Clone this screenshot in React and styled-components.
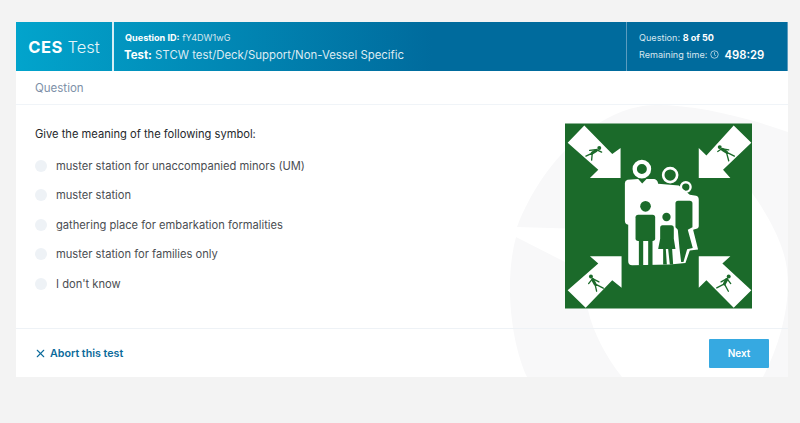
import React from "react";
import styled, { createGlobalStyle } from "styled-components";
import { X } from "lucide-react";

const answers = [
  "muster station for unaccompanied minors (UM)",
  "muster station",
  "gathering place for embarkation formalities",
  "muster station for families only",
  "I don't know",
];

const GREEN = "#1b6a2a";

function Person({ head, torso, limbs }) {
  return (
    <g fill="none" stroke={GREEN} strokeLinecap="round" strokeLinejoin="round">
      <circle cx={head[0]} cy={head[1]} r="6" fill={GREEN} stroke="none" />
      <path d={torso} strokeWidth="9" />
      <path d={limbs} strokeWidth="4" />
    </g>
  );
}

function MusterSign() {
  return (
    <SignSvg viewBox="30 26 562 556">
      <rect x="30" y="26" width="562" height="556" fill={GREEN} />
      <g fill="#fff">
        <polygon points="88,32 172,118 197,100 197,190 105,190 130,165 38,84" />
        <polygon points="537,32 590,84 505,165 527,190 432,190 432,100 455,122" />
        <polygon points="38,527 92,580 172,497 200,520 200,425 105,425 130,447" />
        <polygon points="590,527 537,580 455,497 432,520 432,425 527,425 503,447" />
        <path d="M218 195 L250 193 L262 206 L275 193 L298 193 Q308 195 310 207 L372 212 L405 240 L424 243 Q432 245 432 255 L432 335 Q432 343 415 345 L430 405 L405 408 L392 445 L345 450 L232 452 Q220 452 220 440 L220 330 Q210 328 210 318 L210 205 Q210 197 218 195 Z" />
      </g>
      <g fill="none" stroke="#fff">
        <circle cx="261" cy="163" r="21.5" strokeWidth="13" />
        <circle cx="346" cy="181" r="21" strokeWidth="8" />
        <circle cx="393" cy="217" r="14.5" strokeWidth="7" />
      </g>
      <g fill={GREEN}>
        <circle cx="272" cy="275" r="16" />
        <rect x="242" y="300" width="59" height="79" rx="8" />
        <rect x="252" y="375" width="13" height="78" />
        <rect x="280" y="375" width="13" height="78" />
        <circle cx="335" cy="307" r="12.5" />
        <path d="M323 332 L349 332 Q357 332 357 340 L357 372 L362 403 L352 403 L355 450 L345 450 L340 403 L333 403 L336 450 L325 450 L325 403 L310 403 L316 372 L316 340 Q316 332 323 332 Z" />
        <path d="M370 258 L405 258 Q413 258 413 266 L413 338 L399 345 L414 400 L397 404 L386 442 L379 442 L374 400 L369 345 L362 338 L362 266 Q362 258 370 258 Z" />
      </g>
      <Person head={[133, 100]} torso="M124 107 L112 115" limbs="M112 115 L93 124 M112 115 L110 136 M126 105 L140 112 M122 105 L104 107" />
      <Person head={[495, 97]} torso="M503 104 L515 112" limbs="M515 112 L539 124 M515 112 L522 138 M501 102 L489 110 M505 102 L522 105" />
      <Person head={[108, 486]} torso="M113 495 L120 508" limbs="M120 508 L145 521 M120 508 L125 530 M113 492 L101 507 M113 492 L132 502" />
      <Person head={[522, 486]} torso="M516 495 L509 508" limbs="M509 508 L486 520 M509 508 L521 530 M517 492 L528 507 M517 492 L499 502" />
    </SignSvg>
  );
}

export default function App() {
  return (
    <Page>
      <GlobalStyle />
      <Card>
        <Watermark viewBox="0 0 772 355" aria-hidden="true">
          <path
            fill="#f8f8f9"
            d="M501 205 C530 130 590 83 640 83 C680 83 730 95 772 110 L772 355 L747 355 C765 320 775 280 771 248 C768 220 750 190 734 168 L600 168 L600 208 Z"
          />
          <path
            fill="#f8f8f9"
            d="M500 215 L549 240 L572 288 C577 310 590 335 606 355 L511 355 C495 320 488 260 500 215 Z"
          />
        </Watermark>
        <Header>
          <Brand>
            <b>CES</b> Test
          </Brand>
          <TestInfo>
            <SmallLine>
              <b>Question ID:</b> fY4DW1wG
            </SmallLine>
            <TestLine>
              <b>Test:</b> STCW test/Deck/Support/Non-Vessel Specific
            </TestLine>
          </TestInfo>
          <Status>
            <SmallLine>
              Question: <b>8 of 50</b>
            </SmallLine>
            <TimeLine>
              Remaining time:
              <ClockIcon viewBox="0 0 24 24">
                <circle cx="12" cy="12" r="10" />
                <path d="M12 6v6l3 4" />
              </ClockIcon>
              <Time>498:29</Time>
            </TimeLine>
          </Status>
        </Header>
        <SectionBar>Question</SectionBar>
        <Content>
          <div>
            <Prompt>Give the meaning of the following symbol:</Prompt>
            <AnswerList>
              {answers.map((a) => (
                <Answer key={a}>
                  <Radio />
                  {a}
                </Answer>
              ))}
            </AnswerList>
          </div>
          <MusterSign />
        </Content>
        <Footer>
          <Abort>
            <X size={13} strokeWidth={2} />
            Abort this test
          </Abort>
          <NextButton>Next</NextButton>
        </Footer>
      </Card>
    </Page>
  );
}

const GlobalStyle = createGlobalStyle`
  html, body {
    margin: 0;
    background: #f3f3f3;
  }
`;

const Page = styled.div`
  padding: 22px 12px 46px 16px;
  font-family: "Inter", "Liberation Sans", sans-serif;
`;

const Card = styled.div`
  position: relative;
  overflow: hidden;
  background: #fff;
`;

const Watermark = styled.svg`
  position: absolute;
  left: 0;
  top: 0;
  width: 772px;
  height: 355px;
`;

const Header = styled.header`
  position: relative;
  display: grid;
  grid-template-columns: 98px 513px 1fr;
  height: 49px;
  color: #fff;
  background: linear-gradient(90deg, #02a4cc 0, #006b9d 54%);
  border-right: 1px solid #5c9cbf;
`;

const Brand = styled.div`
  display: flex;
  align-items: center;
  justify-content: center;
  font-size: 16.5px;
  font-weight: 300;
  white-space: pre;
  border-right: 2px solid #d5eef5;
  color: #e4f4f9;
  b {
    color: #fff;
    font-weight: 700;
    letter-spacing: 0.5px;
  }
`;

const TestInfo = styled.div`
  display: flex;
  flex-direction: column;
  justify-content: center;
  gap: 3px;
  padding-left: 11px;
  border-right: 1px solid #5c9cbf;
`;

const SmallLine = styled.div`
  font-size: 9.1px;
  line-height: 13px;
  color: #d6e6ef;
  b {
    color: #fff;
    font-weight: 700;
  }
`;

const TestLine = styled.div`
  margin-left: -1px;
  font-size: 11.4px;
  line-height: 16px;
  color: #dcebf3;
  b {
    color: #fff;
    font-weight: 700;
  }
`;

const Status = styled.div`
  display: flex;
  flex-direction: column;
  justify-content: center;
  gap: 3px;
  padding-left: 12px;
`;

const TimeLine = styled.div`
  display: flex;
  align-items: center;
  font-size: 9.1px;
  line-height: 16px;
  color: #d6e6ef;
`;

const ClockIcon = styled.svg`
  width: 9px;
  height: 9px;
  margin: 0 5px 0 3px;
  fill: none;
  stroke: #d6e6ef;
  stroke-width: 2;
`;

const Time = styled.span`
  font-size: 11.3px;
  font-weight: 600;
  color: #fff;
`;

const SectionBar = styled.div`
  position: relative;
  display: flex;
  align-items: center;
  height: 33px;
  padding-left: 19px;
  font-size: 11.5px;
  color: #7d90a8;
  border-bottom: 1px solid #f0f4f8;
`;

const Content = styled.main`
  position: relative;
  display: flex;
  justify-content: space-between;
  height: 223px;
  padding: 18px 36px 0 19px;
  box-sizing: border-box;
`;

const Prompt = styled.div`
  margin-top: 3px;
  font-size: 11.15px;
  line-height: 16px;
  color: #25282c;
`;

const AnswerList = styled.ul`
  display: flex;
  flex-direction: column;
  gap: 13.4px;
  margin: 16px 0 0;
  padding: 0;
  list-style: none;
`;

const Answer = styled.li`
  display: flex;
  align-items: center;
  gap: 9px;
  font-size: 11.15px;
  line-height: 16px;
  color: #4a4d52;
`;

const Radio = styled.span`
  width: 12px;
  height: 12px;
  border-radius: 50%;
  background: #eef2f6;
`;

const SignSvg = styled.svg`
  width: 187px;
  height: 186px;
  flex: none;
`;

const Footer = styled.footer`
  position: relative;
  display: flex;
  align-items: center;
  justify-content: space-between;
  height: 49px;
  box-sizing: border-box;
  padding: 0 19px;
  border-top: 1px solid #eef2f6;
`;

const Abort = styled.a`
  display: flex;
  align-items: center;
  gap: 3px;
  margin-left: -1px;
  font-size: 10.7px;
  font-weight: 600;
  color: #0b6a9b;
`;

const NextButton = styled.button`
  width: 60px;
  height: 29px;
  border: 0;
  border-radius: 1px;
  background: #36a9e1;
  color: #fff;
  font-family: "Inter", sans-serif;
  font-size: 10px;
  font-weight: 600;
`;
